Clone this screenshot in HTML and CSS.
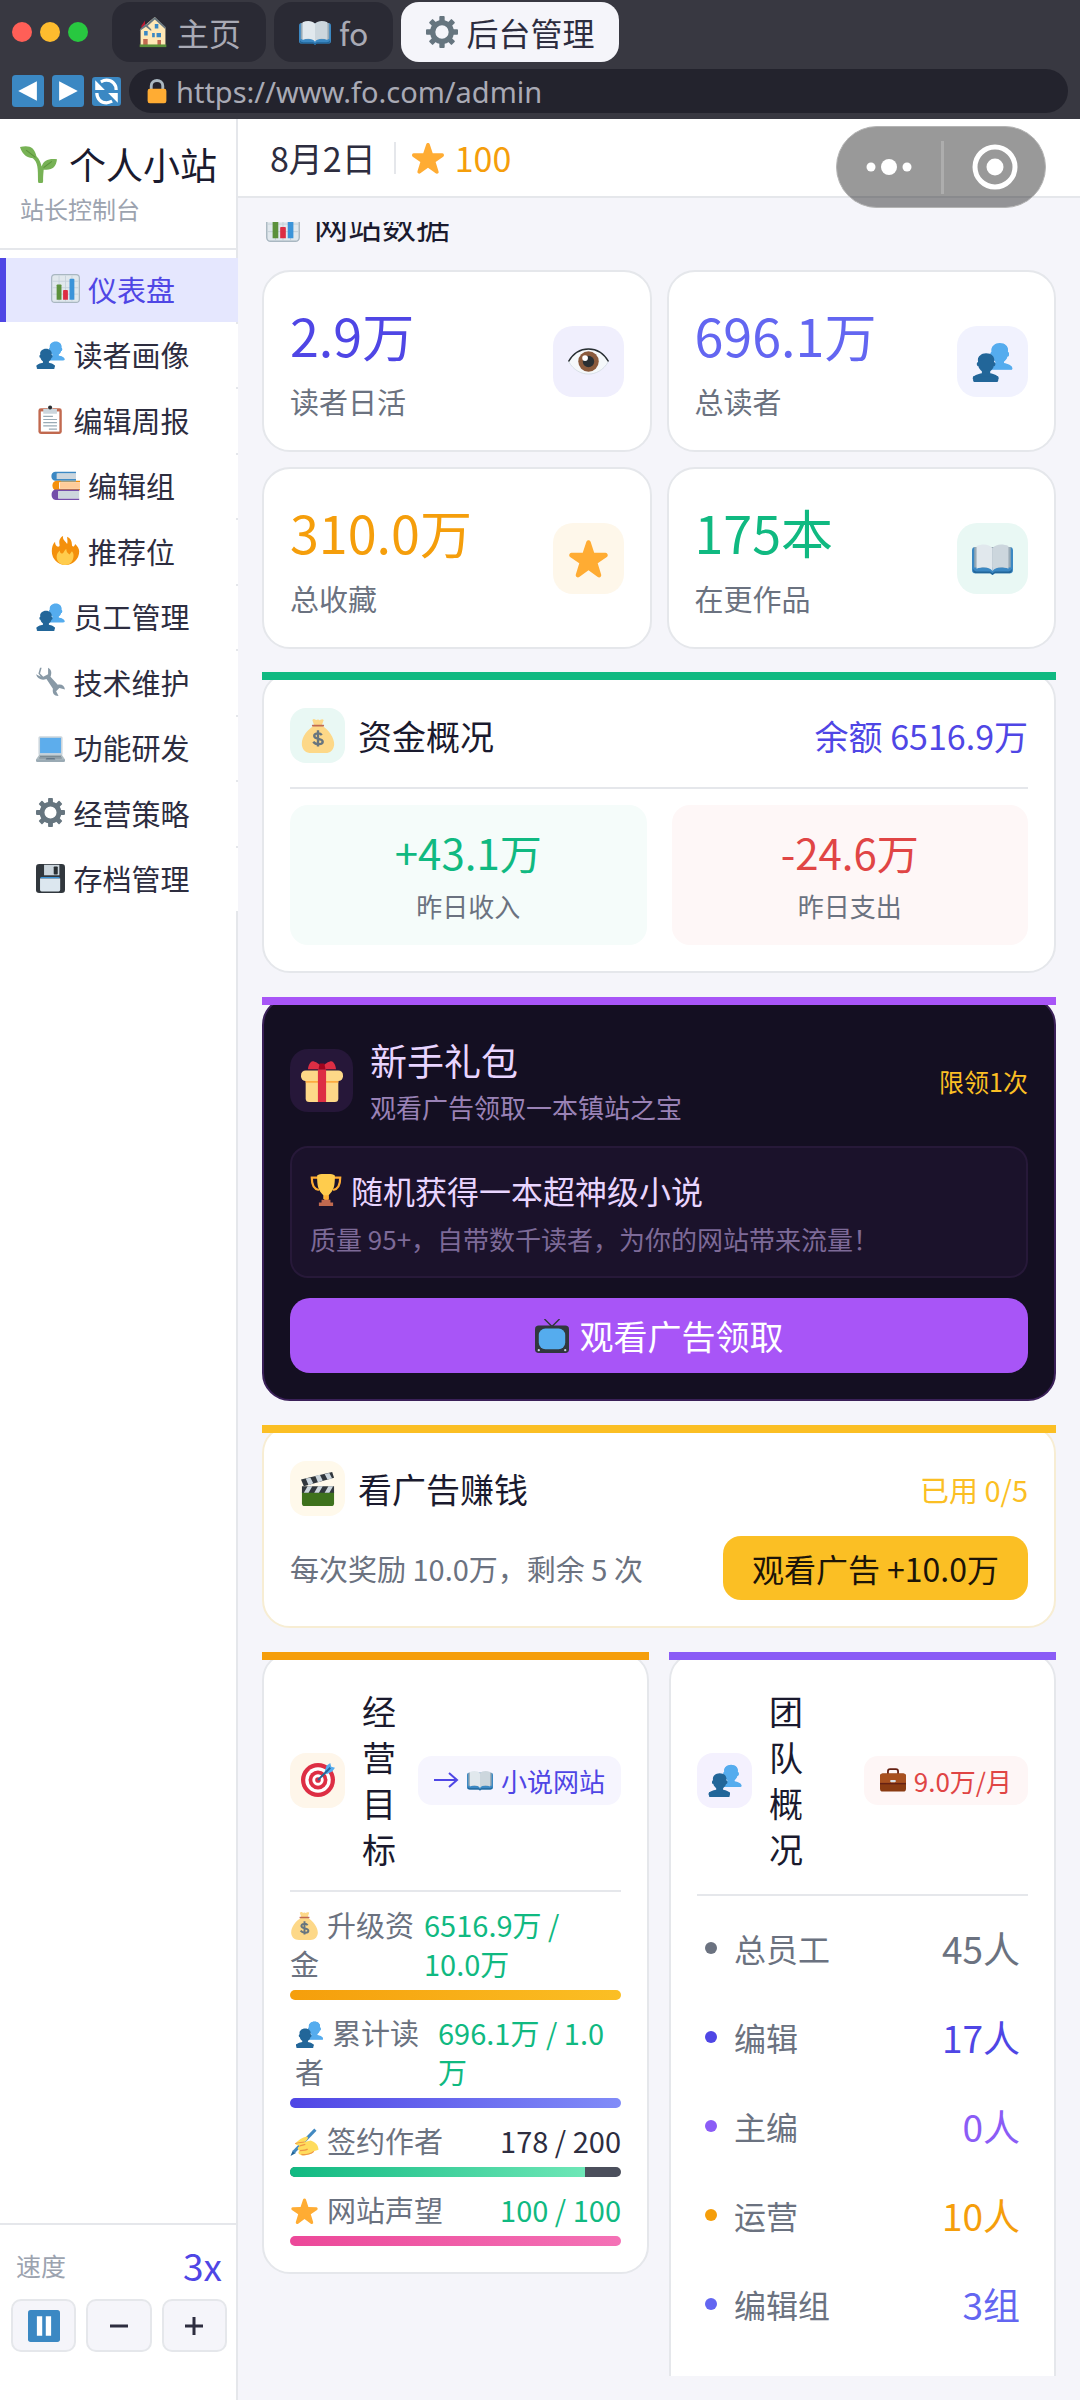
FILE: index.html
```html
<!DOCTYPE html>
<html lang="zh-CN">
<head>
<meta charset="utf-8">
<meta name="viewport" content="width=device-width, initial-scale=1">
<title>后台管理</title>
<link rel="stylesheet" href="styles.css">
</head>
<body>
<svg class="sprite" aria-hidden="true">
  <symbol id="i-house" viewBox="0 0 36 36"><path fill="#BE1931" d="M5 11l4-6v9H5z"/><path fill="#FFE8B6" d="M4 15L12 8l7 7v18H4z"/><path fill="#FFE8B6" d="M12 8L20 1l12 12v20H14z"/><path fill="#66757F" d="M20 1l12 11v3L20 4l-9 8-1-2zM4 14l6-5 6 6v2l-6-5-7 5z"/><path fill="#3B88C3" d="M20 9h4v5h-4zM22 19h5v5h-5zM8 17h4v5H8zM17 19h3v5h-3z"/><path fill="#C1694F" d="M7 26h5v7H7zM23 27h4v6h-4z"/><path fill="#5C913B" d="M3 32h30v3H3z"/></symbol>
  <symbol id="i-book" viewBox="0 0 36 36"><path fill="#3B88C3" d="M3 8h30c2 0 3 1 3 3v17c0 2-1 3-3 3H20l-2 1.500-2-1.500H3c-2 0-3-1-3-3V11c0-2 1-3 3-3z"/><path fill="#226699" d="M1 27c1 2 2 2.500 4 2.500h11l2 1.500 2-1.500h11c2 0 3-.5 4-2.500v1c0 2-1 3-3 3H20l-2 1.500-2-1.500H4c-2 0-3-1-3-3z"/><path fill="#99AAB5" d="M2 8h32v18H2z"/><path fill="#E1E8ED" d="M18 9c-3-4-9-4-14-2v20c5-2 11-2 14 2z"/><path fill="#CCD6DD" d="M18 9c3-4 9-4 14-2v20c-5-2-11-2-14 2z"/></symbol>
  <symbol id="i-gear" viewBox="0 0 36 36"><g fill="#66757F"><path id="t" d="M15 1q0-1 1-1h4q1 0 1 1v6h-6zM15 29h6v6q0 1-1 1h-4q-1 0-1-1z"/><use href="#t" transform="rotate(45 18 18)"/><use href="#t" transform="rotate(90 18 18)"/><use href="#t" transform="rotate(135 18 18)"/></g><circle cx="18" cy="18" r="10.500" fill="none" stroke="#66757F" stroke-width="6"/></symbol>
  <symbol id="i-back" viewBox="0 0 36 36"><rect width="36" height="36" rx="4" fill="#3B88C3"/><path fill="#fff" d="M7 18L28 7v22z"/></symbol>
  <symbol id="i-next" viewBox="0 0 36 36"><rect width="36" height="36" rx="4" fill="#3B88C3"/><path fill="#fff" d="M29 18L8 7v22z"/></symbol>
  <symbol id="i-reload" viewBox="0 0 36 36"><rect width="36" height="36" rx="4" fill="#3B88C3"/><path fill="none" stroke="#fff" stroke-width="4" d="M6 20c0 7 5 12 12 12 3 0 5-1 7-2M30 16c0-7-5-12-12-12-3 0-5 1-7 2"/><path fill="#fff" d="M4 4v12h12zM32 32V20H20z"/></symbol>
  <symbol id="i-lock" viewBox="0 0 36 36"><path fill="none" stroke="#AAB8C2" stroke-width="4" d="M10 18v-7c0-10 16-10 16 0v7"/><rect x="5" y="15" width="26" height="20" rx="3" fill="#FFAC33"/></symbol>
  <symbol id="i-sprout" viewBox="0 0 36 36"><path fill="#77B255" d="M21 20c2-6 7-8 15-7-1 8-5 11-13 10 0 2-.5 5-.5 11a2 2 0 0 1-5 0c0-12 0-18-5-22C5 11 2 7 0 1c9-2 14 0 16 9 3 3 4 6 5 10z"/><path fill="none" stroke="#5C913B" d="M6 4l9 7M23 21l8-6"/></symbol>
  <symbol id="i-chart" viewBox="0 0 36 36"><rect x=".8" y=".8" width="34.400" height="34.400" rx="4" fill="#E1E8ED" stroke="#A9B7C1" stroke-width="1.500"/><path stroke="#C3CFD8" d="M2 9h32M2 17h32M2 25h32M10 2v32M18 2v32M26 2v32"/><path fill="#5C913B" d="M7 14q0-1 1-1h4q1 0 1 1v18H7z"/><path fill="#DD2E44" d="M15 21q0-1 1-1h4q1 0 1 1v11h-6z"/><path fill="#3B94D9" d="M23 7q0-1 1-1h4q1 0 1 1v25h-6z"/></symbol>
  <symbol id="i-bust" viewBox="0 0 36 36"><path d="M24 26.800v-2.570c2-1.350 4.080-3.780 4.700-6.900.19.100.21.170.42.170.99 0 1.700-1.280 1.700-2.870 0-1.560-.82-2.830-1.790-2.860.19-.68.290-1.580.290-2.740C29.320 5.170 26 .53 18.540.53c-6.630 0-10.780 4.640-10.780 8.500 0 1.130.07 2.050.19 2.760-.91.140-1.630 1.350-1.630 2.850 0 1.580.8 2.870 1.800 2.870.2 0 .02-.07.2-.17.63 3.110 2.680 5.540 4.680 6.890v2.420c-5 .64-12 3.430-12 6.220v1.070C1 35 2.080 35 3.140 35h29.720C33.920 35 35 35 35 33.940v-1.060c0-2.620-6-5.230-11-6.080z"/></symbol>
  <symbol id="i-people" viewBox="0 0 36 36"><use href="#i-bust" x="12" y="0" width="24" height="28" preserveAspectRatio="none" fill="#55ACEE"/><use href="#i-bust" x="12" y="0" width="24" height="27" fill="#55ACEE"/><use href="#i-bust" x="0" y="9" width="24" height="27" fill="#226699"/><path fill="#226699" d="M1 31h22v4q0 1-1 1H2q-1 0-1-1z"/></symbol>
  <symbol id="i-clip" viewBox="0 0 36 36"><rect x="3" y="4" width="29" height="32" rx="3" fill="#C1694F"/><path fill="#fff" d="M6 8h23v25H6z"/><path fill="#CCD6DD" d="M9 5h5q3-5 7 0h5v6H9z"/><circle cx="17.500" cy="3" r="2.500" fill="#292F33"/><path stroke="#99AAB5" stroke-width="1.500" d="M9 14h12M9 18h17M9 22h17M9 26h17M16 30h10"/></symbol>
  <symbol id="i-books" viewBox="0 0 36 36"><path fill="#3B88C3" d="M5 1h26v2H8v7h23v2H5C-1 12-1 1 5 1z"/><path fill="#CCD6DD" d="M7 3h24v7H7z"/><path fill="#F4900C" d="M7 12h29v2H10v8h26v2H7c-7 0-7-12 0-12z"/><path fill="#FFCC99" d="M11 14h25v8H11z"/><path fill="#55ACEE" d="M12 12h19v1H12z"/><path fill="#744EAA" d="M6 23h29v2H9v9h26v2H6c-7 0-7-13 0-13z"/><path fill="#CCD6DD" d="M9 25h26v9H9z"/></symbol>
  <symbol id="i-fire" viewBox="0 0 36 36"><path fill="#F4900C" d="M35 19a17 17 0 0 1-34 0c0-5 1-9 4-12 0 4 2 7 5 6C12 12 9 8 11 4c1-2 2-3 4-4-1 5 3 6 5 10 1-3 0-6 0-9 4 2 6 5 6 10 0 3 3 3 4-1 3 3 5 6 5 9z"/><path fill="#FFCC4D" d="M28 24c0 7-4 12-10 12S7 32 7 26c0-4 2-6 4-8 0 3 2 5 4 3 1-1 2-4 4-5 0 4 2 5 4 7l3-4c1 1 2 3 2 5z"/></symbol>
  <symbol id="i-wrench" viewBox="0 0 36 36"><path fill="#8899A6" d="M7 1l-2 7 4 4 6-3V1c4 2 5 6 3 11l9 10c5-1 8 1 9 6l-7-2-4 4 3 6c-6 0-8-4-7-9L13 15C7 17 2 15 0 9l6 3-3-4 2-7z"/></symbol>
  <symbol id="i-laptop" viewBox="0 0 36 36"><rect x="3" y="4" width="30" height="24" rx="2" fill="#CCD6DD"/><path fill="#5DADEC" d="M5 6h26v19H5z"/><path fill="#AEBBC1" d="M4 27h28l4 6v1c0 1-1 2-2 2H2c-1 0-2-1-2-2v-1z"/><path fill="#9AAAB4" d="M0 33h36v1c0 1-1 2-2 2H2c-1 0-2-1-2-2z"/><path stroke="#66757F" d="M5 29h26M4 31h28"/><path fill="#657786" d="M13 31h10l1 2H12z"/></symbol>
  <symbol id="i-disk" viewBox="0 0 36 36"><rect width="36" height="36" rx="4" fill="#31373D"/><rect x="10" y="1" width="19" height="13" fill="#CCD6DD"/><rect x="22" y="3" width="5" height="10" rx="1" fill="#292F33"/><path fill="#3B94D9" d="M5 18q0-2 2-2h21q2 0 2 2H5z"/><path fill="#DCE7EF" d="M5 18h25v14q0 2-2 2H7q-2 0-2-2z"/></symbol>
  <symbol id="i-star" viewBox="0 0 36 36"><path fill="#FFAC33" d="M27.290 34.630c-.41 0-.81-.13-1.160-.37L18 28.420l-8.130 5.840c-.35.240-.75.370-1.150.37s-.81-.13-1.150-.37a1.970 1.970 0 0 1-.72-2.200l3.040-9.800-8.060-5.680A1.980 1.980 0 0 1 3 13.020l9.950-.12 3.190-9.550C16.430 2.540 17.160 2 18 2s1.570.54 1.860 1.350l3.140 9.550 9.970.12a1.980 1.980 0 0 1 1.160 3.560l-8.060 5.690 3.040 9.790a1.970 1.970 0 0 1-1.820 2.570z"/></symbol>
  <symbol id="i-eye" viewBox="0 0 36 36"><path fill="#F5F8FA" stroke="#CCD6DD" stroke-width=".6" d="M.5 18C5 10 12 7 18 7s13 3 17.500 11C31 26 24 29 18 29S5 26 .5 18z"/><circle cx="18" cy="18" r="9" fill="#8A5A3C"/><circle cx="18" cy="18" r="5" fill="#292F33"/><circle cx="15" cy="15" r="2.500" fill="#fff"/><path fill="none" stroke="#292F33" stroke-width="1.300" d="M.5 18C5 10 12 7 18 7s13 3 17.500 11"/></symbol>
  <symbol id="i-money" viewBox="0 0 36 36"><path fill="#FDD888" d="M12 1c2-2 3 0 4 0s2-1 3 0 3-2 5 0l-2 6c8 5 14 14 13 21-1 5-4 8-9 8H11c-6 0-9-3-10-8C0 20 6 12 14 7z"/><path fill="#BF6952" d="M12 6h12q1 1 0 2H12q-1-1 0-2z"/><path fill="none" stroke="#67757F" stroke-width="2.500" d="M22 17c-2-3-8-2-8 1 0 4 9 2 9 6 0 3-7 4-10 0M18 12v17"/></symbol>
  <symbol id="i-gift" viewBox="0 0 36 36"><path fill="#FDD888" d="M4 17h28v16q0 3-3 3H7q-3 0-3-3z"/><rect x="0" y="9" width="36" height="9" rx="4" fill="#FDD888"/><path fill="#FCAB40" d="M4 18h28v1.500H4z"/><path fill="#DD2E44" d="M14.500 8h7v28h-7z"/><path fill="#DD2E44" d="M18 8H6c0-3 2-7 4-7 2 0 5 2 6 3h4c1-1 4-3 6-3s4 4 4 7z"/><path fill="#A0041E" d="M16 3h4l1 5h-6z"/></symbol>
  <symbol id="i-cup" viewBox="0 0 36 36"><path fill="none" stroke="#FFAC33" stroke-width="2.500" d="M9 4H2c0 7 1 13 8 14M27 4h7c0 7-1 13-8 14"/><path fill="#FFCC4D" d="M8 2c0-3 20-3 20 0 0 12-1 16-7 22v4h-6v-4C9 18 8 14 8 2z"/><path fill="#FFAC33" d="M16 24h5v7h-5z"/><path fill="#C1694F" d="M13 29h10v3h3v4H10v-4h3z"/></symbol>
  <symbol id="i-tv" viewBox="0 0 36 36"><path fill="none" stroke="#31373D" stroke-width="1.500" d="M10 0l8 8 8-8"/><rect y="7" width="36" height="29" rx="4" fill="#31373D"/><rect x="4" y="10" width="28" height="22" rx="7" fill="#55ACEE"/><circle cx="4" cy="33" r="1.200" fill="#CCD6DD"/><circle cx="32" cy="33" r="1.200" fill="#CCD6DD"/></symbol>
  <symbol id="i-clap" viewBox="0 0 36 36"><path fill="#3E721D" d="M1 21h34v12q0 3-3 3H4q-3 0-3-3z"/><path fill="#31373D" d="M1 15h34v7H1z"/><path fill="#CCD6DD" d="M7 15h5l-4 7H3zM18 15h5l-4 7h-5zM29 15h5l-4 7h-5z"/><path fill="#31373D" d="M0 8L33 0l2 6L3 15z"/><path fill="#CCD6DD" d="M5 7l5-1 3 6-5 2zM15 4l5-1 3 6-5 2zM25 2l5-1 3 6-5 1z"/></symbol>
  <symbol id="i-dart" viewBox="0 0 36 36"><circle cx="18" cy="18" r="18" fill="#DD2E44"/><circle cx="18" cy="18" r="13.500" fill="#fff"/><circle cx="18" cy="18" r="10" fill="#DD2E44"/><circle cx="18" cy="18" r="6" fill="#fff"/><circle cx="18" cy="18" r="3" fill="#DD2E44"/><path fill="#55ACEE" d="M25 9l2-6 4-3 1 4 4 1-3 4-6 3z"/><path stroke="#226699" stroke-width="2" d="M18 18l13-13"/></symbol>
  <symbol id="i-case" viewBox="0 0 36 36"><path fill="none" stroke="#662113" stroke-width="2.500" d="M11 10V6q0-3 3-3h8q3 0 3 3v4"/><rect y="9" width="36" height="25" rx="4" fill="#8A3B12"/><path fill="#A8501F" d="M0 13q0-4 4-4h28q4 0 4 4v9H0z"/><path fill="#662113" d="M0 22h36v2H0z"/><rect x="14" y="18" width="8" height="3" rx="1.500" fill="#D9E2E8"/></symbol>
  <symbol id="i-write" viewBox="0 0 36 36"><path fill="#269" d="M0 36l3-7 4 3z"/><path stroke="#4289C1" stroke-width="4" d="M4 31L32 2"/><path fill="#FFDC5D" d="M6 20c4-4 9-8 15-9 3 0 1 5-3 7l8-2c6 2 10 6 10 12l-6 2c-3 4-10 6-16 5-4-1-5-4-2-6-4-1-3-5 0-6-3-1-5-1-6-3z"/><path fill="none" stroke="#EF9645" stroke-width="1.500" d="M12 29c4 0 8 0 10-2M12 23l7-2M6 20c4-1 8-2 12-2M14 34c6 1 13-1 16-4"/></symbol>
  <symbol id="i-pause" viewBox="0 0 36 36"><rect width="36" height="36" rx="3" fill="#3B88C3"/><path fill="#fff" d="M10 7h6v22h-6zM20 7h6v22h-6z"/></symbol>
</svg>

<div class="app">
  <header class="browser">
    <div class="tabs">
      <div class="lights"><i class="light light--red"></i><i class="light light--amber"></i><i class="light light--green"></i></div>
      <button class="tab"><svg class="ico"><use href="#i-house"/></svg>主页</button>
      <button class="tab"><svg class="ico"><use href="#i-book"/></svg>fo</button>
      <button class="tab tab--active"><svg class="ico"><use href="#i-gear"/></svg>后台管理</button>
    </div>
    <div class="address-row">
      <button class="nav-btn" aria-label="后退"><svg><use href="#i-back"/></svg></button>
      <button class="nav-btn" aria-label="前进"><svg><use href="#i-next"/></svg></button>
      <button class="nav-btn nav-btn--small" aria-label="刷新"><svg><use href="#i-reload"/></svg></button>
      <label class="address"><svg class="address__lock"><use href="#i-lock"/></svg><input type="text" aria-label="网址" value="https://www.fo.com/admin"></label>
    </div>
  </header>

  <div class="workspace">
    <aside class="sidebar">
      <div class="brand">
        <div class="brand__name"><svg class="ico"><use href="#i-sprout"/></svg>个人小站</div>
        <div class="brand__sub">站长控制台</div>
      </div>
      <nav class="menu">
        <a href="#" class="menu__item menu__item--active"><svg class="ico"><use href="#i-chart"/></svg>仪表盘</a>
        <a href="#" class="menu__item"><svg class="ico"><use href="#i-people"/></svg>读者画像</a>
        <a href="#" class="menu__item"><svg class="ico"><use href="#i-clip"/></svg>编辑周报</a>
        <a href="#" class="menu__item"><svg class="ico"><use href="#i-books"/></svg>编辑组</a>
        <a href="#" class="menu__item"><svg class="ico"><use href="#i-fire"/></svg>推荐位</a>
        <a href="#" class="menu__item"><svg class="ico"><use href="#i-people"/></svg>员工管理</a>
        <a href="#" class="menu__item"><svg class="ico"><use href="#i-wrench"/></svg>技术维护</a>
        <a href="#" class="menu__item"><svg class="ico"><use href="#i-laptop"/></svg>功能研发</a>
        <a href="#" class="menu__item"><svg class="ico"><use href="#i-gear"/></svg>经营策略</a>
        <a href="#" class="menu__item"><svg class="ico"><use href="#i-disk"/></svg>存档管理</a>
      </nav>
      <div class="speed">
        <div class="speed__head"><span class="speed__label">速度</span><span class="speed__value">3x</span></div>
        <div class="speed__buttons">
          <button aria-label="暂停"><svg class="speed__pause"><use href="#i-pause"/></svg></button>
          <button aria-label="减速"><svg class="speed__sign" viewBox="0 0 18 18"><path d="M0 9h18"/></svg></button>
          <button aria-label="加速"><svg class="speed__sign" viewBox="0 0 18 18"><path d="M0 9h18M9 0v18"/></svg></button>
        </div>
      </div>
    </aside>

    <div class="main">
      <div class="topbar">
        <span>8月2日</span>
        <span class="topbar__rule"></span>
        <span class="topbar__stars"><svg class="ico"><use href="#i-star"/></svg>100</span>
        <div class="capsule">
          <button aria-label="更多"><svg viewBox="0 0 46 46" width="46" height="46" fill="#fff"><circle cx="5" cy="23" r="4.500"/><circle cx="23" cy="23" r="8"/><circle cx="41" cy="23" r="4.500"/></svg></button>
          <button aria-label="关闭"><svg viewBox="0 0 46 46" width="46" height="46"><circle cx="23" cy="23" r="20" fill="none" stroke="#fff" stroke-width="5"/><circle cx="23" cy="23" r="8.500" fill="#fff"/></svg></button>
        </div>
      </div>

      <main class="content">
        <div class="scroller">
          <h2 class="section-title"><svg class="ico"><use href="#i-chart"/></svg>网站数据</h2>

          <section class="stats">
            <div class="stat"><div><div class="stat__num c-indigo">2.9万</div><div class="stat__label">读者日活</div></div><span class="stat__icon bg-indigo"><svg><use href="#i-eye"/></svg></span></div>
            <div class="stat"><div><div class="stat__num c-blue">696.1万</div><div class="stat__label">总读者</div></div><span class="stat__icon bg-blue"><svg><use href="#i-people"/></svg></span></div>
            <div class="stat"><div><div class="stat__num c-amber">310.0万</div><div class="stat__label">总收藏</div></div><span class="stat__icon bg-amber"><svg><use href="#i-star"/></svg></span></div>
            <div class="stat"><div><div class="stat__num c-green">175本</div><div class="stat__label">在更作品</div></div><span class="stat__icon bg-green"><svg><use href="#i-book"/></svg></span></div>
          </section>

          <section class="card card--green">
            <div class="card__head card__head--ruled">
              <span class="badge bg-green"><svg><use href="#i-money"/></svg></span>
              <h3>资金概况</h3>
              <span class="card__balance">余额 6516.9万</span>
            </div>
            <div class="flows">
              <div class="flow flow--in"><div class="flow__num">+43.1万</div><div class="flow__label">昨日收入</div></div>
              <div class="flow flow--out"><div class="flow__num">-24.6万</div><div class="flow__label">昨日支出</div></div>
            </div>
          </section>

          <section class="card card--gift">
            <div class="gift-head">
              <span class="gift-head__icon"><svg><use href="#i-gift"/></svg></span>
              <div><h3>新手礼包</h3><p>观看广告领取一本镇站之宝</p></div>
              <span class="gift-head__limit">限领1次</span>
            </div>
            <div class="prize">
              <div class="prize__title"><svg class="ico"><use href="#i-cup"/></svg>随机获得一本超神级小说</div>
              <p>质量 95+，自带数千读者，为你的网站带来流量！</p>
            </div>
            <button class="claim"><svg class="ico"><use href="#i-tv"/></svg>观看广告领取</button>
          </section>

          <section class="card card--ads">
            <div class="card__head">
              <span class="badge bg-yellow"><svg><use href="#i-clap"/></svg></span>
              <h3>看广告赚钱</h3>
              <span class="card__used">已用 0/5</span>
            </div>
            <div class="ads-row"><span>每次奖励 10.0万，剩余 5 次</span><button class="watch">观看广告 +10.0万</button></div>
          </section>

          <div class="pair">
            <section class="card card--goals">
              <div class="card__head card__head--narrow">
                <span class="badge bg-orange"><svg><use href="#i-dart"/></svg></span>
                <h3>经营目标</h3>
                <a href="#" class="chip chip--indigo"><svg class="chip__arrow" viewBox="0 0 25 20"><path d="M0 10h23M15 3l8 7-8 7"/></svg><svg class="ico"><use href="#i-book"/></svg>小说网站</a>
              </div>
              <div class="goal">
                <div class="goal__text goal__text--wrap"><span><svg class="ico"><use href="#i-money"/></svg>升级资<br>金</span><span class="goal__value c-green">6516.9万 /<br>10.0万</span></div>
                <div class="bar" role="progressbar" aria-label="升级资金" aria-valuenow="100"><div class="bar__fill bar__fill--amber" style="width:100%"></div></div>
              </div>
              <div class="goal">
                <div class="goal__text goal__text--wrap goal__text--inset"><span><svg class="ico"><use href="#i-people"/></svg>累计读<br>者</span><span class="goal__value c-green">696.1万 / 1.0<br>万</span></div>
                <div class="bar" role="progressbar" aria-label="累计读者" aria-valuenow="100"><div class="bar__fill bar__fill--indigo" style="width:100%"></div></div>
              </div>
              <div class="goal">
                <div class="goal__text"><span><svg class="ico"><use href="#i-write"/></svg>签约作者</span><span class="c-dark">178 / 200</span></div>
                <div class="bar" role="progressbar" aria-label="签约作者" aria-valuenow="89"><div class="bar__fill bar__fill--green" style="width:89%"></div></div>
              </div>
              <div class="goal">
                <div class="goal__text"><span><svg class="ico"><use href="#i-star"/></svg>网站声望</span><span class="c-green">100 / 100</span></div>
                <div class="bar" role="progressbar" aria-label="网站声望" aria-valuenow="100"><div class="bar__fill bar__fill--pink" style="width:100%"></div></div>
              </div>
            </section>

            <section class="card card--team">
              <div class="card__head card__head--narrow">
                <span class="badge bg-violet"><svg><use href="#i-people"/></svg></span>
                <h3>团队概况</h3>
                <span class="chip chip--red"><svg class="ico"><use href="#i-case"/></svg>9.0万/月</span>
              </div>
              <ul class="team">
                <li class="c-slate"><span>总员工</span><b>45人</b></li>
                <li class="c-indigo"><span>编辑</span><b>17人</b></li>
                <li class="c-violet"><span>主编</span><b>0人</b></li>
                <li class="c-amber"><span>运营</span><b>10人</b></li>
                <li class="c-blue"><span>编辑组</span><b>3组</b></li>
              </ul>
            </section>
          </div>
        </div>
      </main>
    </div>
  </div>
</div>
</body>
</html>
```
FILE: styles.css
```css
* { box-sizing: border-box; margin: 0; padding: 0; }
body { font-family: "Noto Sans CJK SC", "Noto Sans", sans-serif; font-size: 29px; color: #2d2d3f; background: #f5f5fa; }
button, input { font: inherit; color: inherit; border: 0; background: none; }
button { cursor: pointer; }
a { color: inherit; text-decoration: none; }
svg { display: block; }
h2, h3, b { font-weight: 400; }
ul { list-style: none; }
.sprite { position: absolute; width: 0; height: 0; }
.ico { width: 1em; height: 1em; flex: none; }

.c-indigo { color: #4f46e5; }
.c-blue { color: #6366f1; }
.c-amber { color: #f59e0b; }
.c-green { color: #10b981; }
.c-violet { color: #8b5cf6; }
.c-slate { color: #6b7280; }
.c-dark { color: #2d2d3f; }
.bg-indigo { background: #f0effd; }
.bg-blue { background: #f1f2fe; }
.bg-amber { background: #fef7ea; }
.bg-green { background: #e9f8f4; }
.bg-yellow { background: #fff9eb; }
.bg-orange { background: #fef6ea; }
.bg-violet { background: #f4f1fe; }

.app { height: 100vh; display: flex; flex-direction: column; overflow: hidden; }

/* browser chrome */
.browser { background: #383841; padding: 2px 12px 6px; display: flex; flex-direction: column; gap: 7px; }
.tabs { display: flex; align-items: center; gap: 8px; }
.lights { display: flex; gap: 8px; margin-right: 16px; }
.light { width: 20px; height: 20px; border-radius: 50%; }
.light--red { background: #ff5f57; }
.light--amber { background: #febc2e; }
.light--green { background: #28c840; }
.tab { display: flex; align-items: center; gap: 8px; height: 60px; padding: 0 25px; border-radius: 18px; background: #2a2a34; color: #a9aab5; font-size: 32px; }
.tab--active { background: #f5f5fa; color: #2d2d3f; }
.address-row { display: flex; align-items: center; gap: 8px; }
.nav-btn svg { width: 32px; height: 32px; }
.nav-btn--small svg { width: 29px; height: 29px; }
.address { flex: 1; display: flex; align-items: center; gap: 5px; height: 44px; padding: 0 14px; border-radius: 22px; background: #23232d; color: #a9aab5; }
.address__lock { width: 28px; height: 26px; }
.address input { flex: 1; min-width: 0; height: 44px; outline: 0; font-family: "Noto Sans", sans-serif; }

.workspace { flex: 1; min-height: 0; display: flex; }

/* sidebar */
.sidebar { width: 238px; flex: none; display: flex; flex-direction: column; background: #fff; border-right: 2px solid #e5e7eb; }
.brand { padding: 18px 18px 21px 20px; border-bottom: 2px solid #e5e7eb; }
.brand__name { display: flex; align-items: center; gap: 12px; line-height: 54px; font-size: 37px; color: #1a1a2e; white-space: nowrap; }
.brand__sub { line-height: 36px; font-size: 24px; color: #9ca3af; }
.menu { display: grid; grid-auto-rows: 1fr; gap: 2px; min-height: 653px; margin: 8px -2px 0 0; }
.menu__item { display: flex; align-items: center; justify-content: center; gap: 8px; padding: 0 18px 2px 0; border-left: 6px solid #fff; background: #fff; }
.menu__item--active { background: #e5e7fe; border-color: #4f46e5; color: #4f46e5; }
.speed { margin-top: auto; padding: 14px 9px 48px 11px; border-top: 2px solid #e5e7eb; }
.speed__head { display: flex; align-items: center; justify-content: space-between; height: 52px; padding: 0 5px; }
.speed__label { font-size: 25px; color: #9ca3af; }
.speed__value { font-size: 37px; color: #4f46e5; }
.speed__buttons { display: grid; grid-template-columns: repeat(3, 1fr); gap: 10px; margin-top: 8px; }
.speed__buttons button { display: grid; place-items: center; height: 53px; border: 2px solid #e5e7eb; border-radius: 10px; background: #f5f5fa; }
.speed__pause { width: 32px; height: 32px; }
.speed__sign { width: 18px; height: 18px; stroke: #2d2d3f; stroke-width: 3; }

/* top bar */
.main { flex: 1; min-width: 0; display: flex; flex-direction: column; }
.topbar { position: relative; display: flex; align-items: center; height: 79px; padding: 0 32px; background: #fff; border-bottom: 2px solid #e5e7eb; font-size: 34px; }
.topbar__rule { width: 2px; height: 32px; margin: 0 15px 0 18px; background: #e5e7eb; }
.topbar__stars { display: flex; align-items: center; gap: 10px; color: #f59e0b; }
.capsule { position: absolute; z-index: 2; top: 7px; right: 34px; width: 210px; height: 82px; display: grid; grid-template-columns: 1fr 1fr; align-items: center; border: 1px solid #b4b4b4; border-radius: 41px; background: rgba(0, 0, 0, .4); }
.capsule button { display: grid; place-items: center; height: 53px; }
.capsule button + button { border-left: 3px solid #adadad; }

/* content */
.content { flex: 1; min-height: 0; display: flex; padding: 24px; }
.scroller { flex: 1; min-width: 0; overflow: hidden; }
.section-title { display: flex; align-items: center; gap: 14px; margin: -20px 0 22px; padding-left: 4px; line-height: 46px; font-size: 34px; color: #1a1a2e; }
.stats { display: grid; grid-template-columns: 1fr 1fr; gap: 15px; margin-bottom: 23px; }
.stat { display: flex; align-items: center; justify-content: space-between; height: 182px; padding: 0 26px; background: #fff; border: 2px solid #e5e7eb; border-radius: 28px; }
.stat__num { line-height: 72px; font-size: 52px; }
.stat__label { margin-top: 8px; line-height: 44px; color: #6b7280; }
.stat__icon { display: grid; place-items: center; width: 71px; height: 71px; border-radius: 20px; }
.stat__icon svg { width: 41px; height: 41px; }

.card { position: relative; margin-bottom: 24px; padding: 34px 26px 26px; background: #fff; border: 2px solid #e5e7eb; border-radius: 28px; }
.card::before { content: ""; position: absolute; top: -2px; left: -2px; right: -2px; height: 8px; background: currentColor; }
.card--green::before { color: #10b981; }
.card--gift::before { color: #a855f7; }
.card--ads::before { color: #fbbf24; }
.card--goals::before { color: #f59e0b; }
.card--team::before { color: #8b5cf6; }
.card__head { display: flex; align-items: center; gap: 13px; font-size: 34px; color: #1a1a2e; }
.card__head h3 { font-size: 34px; line-height: 46px; }
.card__head > :last-child { margin-left: auto; }
.card__head--ruled { padding-bottom: 24px; border-bottom: 2px solid #e5e7eb; }
.badge { display: grid; place-items: center; flex: none; width: 55px; height: 55px; border-radius: 16px; }
.badge svg { width: 34px; height: 34px; }
.card__balance { color: #4f46e5; }
.card__used { font-size: 29px; color: #fbbf24; }

.flows { display: grid; grid-template-columns: 1fr 1fr; gap: 25px; margin-top: 16px; }
.flow { height: 140px; padding-top: 16px; text-align: center; border-radius: 18px; }
.flow--in { background: #f5fcfa; color: #10b981; }
.flow--out { background: #fef7f7; color: #e04545; }
.flow__num { line-height: 62px; font-size: 42px; }
.flow__label { margin-top: 5px; line-height: 36px; font-size: 26px; color: #6b7280; }

.card--gift { background: #140f22; border-color: #3a2058; color: #e9d5ff; }
.gift-head { display: flex; align-items: center; gap: 17px; height: 95px; }
.gift-head__icon { display: grid; place-items: center; width: 63px; height: 63px; border-radius: 18px; background: #261739; }
.gift-head__icon svg { width: 42px; height: 42px; }
.gift-head h3 { line-height: 52px; font-size: 37px; }
.gift-head p { line-height: 42px; font-size: 26px; color: #9a82b6; }
.gift-head__limit { margin-left: auto; font-size: 25px; color: #fbbf24; }
.prize { margin: 18px 0 20px; padding: 19px 18px; border: 2px solid #271939; border-radius: 18px; background: #1b122b; }
.prize__title { display: flex; align-items: center; gap: 9px; line-height: 46px; font-size: 32px; }
.prize p { margin-top: 8px; line-height: 36px; font-size: 26px; color: #7d6a98; }
.claim { display: flex; align-items: center; justify-content: center; gap: 11px; width: 100%; height: 75px; border-radius: 20px; background: #a855f7; color: #fff; font-size: 34px; }

.card--ads { border-color: #f7edd3; }
.ads-row { display: flex; align-items: center; justify-content: space-between; margin-top: 20px; color: #6b7280; }
.watch { height: 64px; padding: 0 29px; border-radius: 18px; background: #fbbf24; color: #1c1408; font-size: 32px; }

.pair { display: grid; grid-template-columns: 1fr 1fr; align-items: start; gap: 20px; }
.card__head--narrow { gap: 17px; padding-bottom: 18px; border-bottom: 2px solid #e5e7eb; }
.card__head--narrow h3 { width: 34px; }
.chip { display: flex; align-items: center; gap: 8px; height: 49px; padding: 0 16px; border-radius: 14px; font-size: 26px; white-space: nowrap; }
.chip--indigo { background: #f6f5fe; color: #4f46e5; }
.chip--red { background: #fef6f6; color: #e04545; }
.chip__arrow { width: 25px; height: 20px; fill: none; stroke: currentColor; stroke-width: 2; }

.goal { margin-top: 13px; }
.goal__text { display: flex; justify-content: space-between; line-height: 39px; margin-bottom: 7px; color: #6b7280; white-space: nowrap; }
.goal__text > .c-green { color: #10b981; }
.goal__text > .c-dark { color: #2d2d3f; }
.goal__text .ico { display: inline-block; height: 28px; margin-right: 8px; vertical-align: -3px; }
.goal__text--wrap { justify-content: flex-start; gap: 10px; }
.goal__text--inset { padding-left: 5px; gap: 19px; }
.bar { height: 10px; border-radius: 5px; overflow: hidden; background: #4b4f5c; }
.bar__fill { height: 10px; }
.bar__fill--amber { background: linear-gradient(90deg, #f59e0b, #fbbf24); }
.bar__fill--indigo { background: linear-gradient(90deg, #4f46e5, #818cf8); }
.bar__fill--green { background: linear-gradient(90deg, #10b981, #6ee7b7); }
.bar__fill--pink { background: linear-gradient(90deg, #ec4899, #f472b6); }

.card--team { padding-bottom: 60px; }
.card--team .card__head { padding-bottom: 22px; }
.team { padding: 7px 8px 0; }
.team li { display: flex; align-items: center; gap: 17px; height: 89px; }
.team li::before { content: ""; width: 12px; height: 12px; border-radius: 50%; background: currentColor; }
.team span { font-size: 32px; color: #6b7280; }
.team b { margin-left: auto; font-size: 37px; }
```
